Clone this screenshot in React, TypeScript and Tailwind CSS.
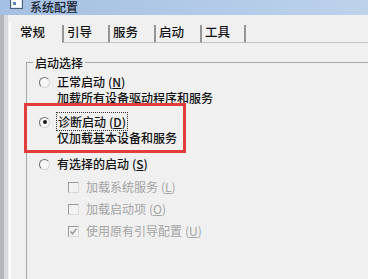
import React from 'react';

const font = { fontFamily: '"Noto Sans CJK SC", "Noto Sans", sans-serif' };

function Radio({ checked }: { checked?: boolean }) {
    return (
        <div className="w-[11px] h-[16px] flex items-center shrink-0">
            <div className="w-[11px] h-[11px] rounded-full border border-t-[#707070] border-l-[#707070] border-r-[#d4d4d4] border-b-[#d4d4d4] bg-[#f7f7f7] flex items-center justify-center">
                {checked && <div className="w-[4px] h-[4px] rounded-full bg-[#1a1a1a]" />}
            </div>
        </div>
    );
}

function Check({ checked }: { checked?: boolean }) {
    return (
        <div className="w-[11px] h-[16px] flex items-center shrink-0">
            <div className="w-[11px] h-[11px] border border-t-[#9a9a9a] border-l-[#9a9a9a] border-r-[#dadada] border-b-[#dadada] bg-[#f2f2f2] flex items-center justify-center">
                {checked && (
                    <svg width="9" height="9" viewBox="0 0 9 9">
                        <polyline points="1.5,4.5 3.5,6.8 7.5,1.8" fill="none" stroke="#9c9c9c" strokeWidth="1.6" />
                    </svg>
                )}
            </div>
        </div>
    );
}

function Key({ k }: { k: string }) {
    return <span className="ml-[3px]">(<u>{k}</u>)</span>;
}

export default function App() {
    const tabs = ['引导', '服务', '启动', '工具'];

    return (
        <div className="w-[368px] h-[279px] overflow-hidden bg-[#f0f0f0] flex flex-col text-[12px]" style={font}>
            {/* title bar */}
            <div className="h-[15px] shrink-0 bg-linear-to-r from-[#a4c0e2] to-[#bdd2eb] flex items-start overflow-hidden">
                <svg width="13" height="12" viewBox="0 0 13 12" className="ml-[10px] -mt-[3px]">
                    <rect x="0.5" y="0.5" width="12" height="11" fill="#dce8f6" stroke="#4b5d75" />
                    <rect x="2" y="3" width="9" height="7" fill="#ffffff" />
                    <rect x="3" y="5" width="3" height="3" fill="#5f86b8" />
                </svg>
                <span className="ml-[7px] leading-[13px] text-[12px] font-medium text-[#1c2533]">系统配置</span>
            </div>

            <div className="flex flex-1">
                <div className="w-[4px] bg-[#b4b8bd]" />
                <div className="w-[4px] bg-[#d8dadd]" />
                <div className="flex-1 flex flex-col pl-[1px]">
                    {/* tabs */}
                    <div className="flex mt-[7px] h-[21px] items-end font-medium">
                        <div className="w-[53px] h-[21px] border-l-2 border-[#fbfbfb] pl-[9px] pt-[3px] leading-[14px] text-[12.5px] text-[#111]">
                            常规
                        </div>
                        {tabs.map((t, i) => (
                            <div
                                key={t}
                                className={`w-[46px] h-[18px] border-l-2 border-l-[#969696] border-b border-b-[#c6c6c6] pl-[3px] leading-[14px] text-[12.5px] text-[#111] ${i === tabs.length - 1 ? 'border-r-2 border-r-[#969696]' : ''}`}
                            >
                                {t}
                            </div>
                        ))}
                        <div className="flex-1 h-[18px] border-b border-[#c6c6c6]" />
                    </div>

                    {/* panel */}
                    <div className="flex-1 flex flex-col border-l-2 border-[#fbfbfb] pl-[15px] pt-[19px]">
                        <div className="flex-1 relative border-t border-l border-[#a6a6a6] pl-[12px] pt-[11px] leading-[16px] text-[#111] font-medium">
                            <span className="absolute left-[6px] -top-[8px] px-[2px] bg-[#f0f0f0]">启动选择</span>

                            <div className="flex">
                                <Radio />
                                <div className="ml-[7px]">
                                    <div>正常启动<Key k="N" /></div>
                                    <div>加载所有设备驱动程序和服务</div>
                                </div>
                            </div>

                            <div className="flex mt-[8px] relative">
                                <div className="absolute -left-[15px] -top-[11px] w-[162px] h-[50px] border-[3px] border-[#e23c3c]" />
                                <Radio checked />
                                <div className="ml-[7px]">
                                    <div>
                                        <span className="-ml-px px-px border border-dotted border-[#333]">诊断启动<Key k="D" /></span>
                                    </div>
                                    <div>仅加载基本设备和服务</div>
                                </div>
                            </div>

                            <div className="flex mt-[10px]">
                                <Radio />
                                <div className="ml-[7px]">有选择的启动<Key k="S" /></div>
                            </div>

                            <div className="ml-[29px] text-[#a4a4a4] font-normal">
                                <div className="flex mt-[7px]">
                                    <Check />
                                    <div className="ml-[7px]">加载系统服务<Key k="L" /></div>
                                </div>
                                <div className="flex mt-[6px]">
                                    <Check />
                                    <div className="ml-[7px]">加载启动项<Key k="O" /></div>
                                </div>
                                <div className="flex mt-[6px]">
                                    <Check checked />
                                    <div className="ml-[7px]">使用原有引导配置<Key k="U" /></div>
                                </div>
                            </div>
                        </div>
                    </div>
                </div>
            </div>
        </div>
    );
}
